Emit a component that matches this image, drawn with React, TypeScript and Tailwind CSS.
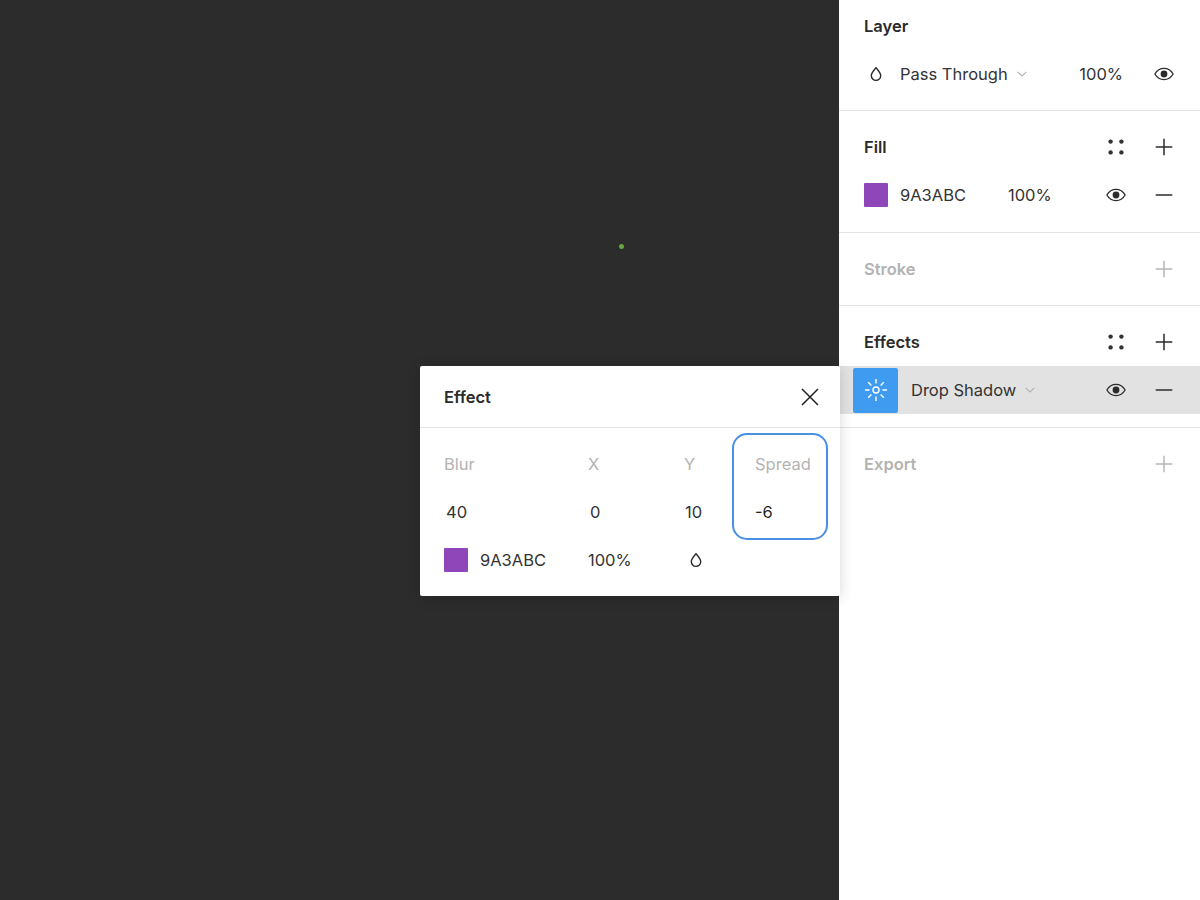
import type { ReactNode } from 'react';

const FONT = 'font-["Inter","Liberation_Sans",sans-serif]';

function Drop({ className = 'text-[#2b2b2b]' }: { className?: string }) {
  return (
    <svg width="14" height="16" viewBox="0 0 14 16" fill="none" className={className}>
      <path
        d="M7 1.6 C8.6 3.9 11.7 6.6 11.7 9.6 C11.7 12.3 9.6 14.4 7 14.4 C4.4 14.4 2.3 12.3 2.3 9.6 C2.3 6.6 5.4 3.9 7 1.6 Z"
        stroke="currentColor"
        strokeWidth="1.4"
        strokeLinejoin="round"
      />
    </svg>
  );
}

function Eye() {
  return (
    <svg width="20" height="14" viewBox="0 0 20 14" fill="none" className="text-[#2b2b2b]">
      <path
        d="M0.9 7 C3 3.4 6.2 1.4 10 1.4 C13.8 1.4 17 3.4 19.1 7 C17 10.6 13.8 12.6 10 12.6 C6.2 12.6 3 10.6 0.9 7 Z"
        stroke="currentColor"
        strokeWidth="1.3"
      />
      <circle cx="10" cy="7" r="3.4" fill="currentColor" />
    </svg>
  );
}

function Dots() {
  return (
    <svg width="16" height="16" viewBox="0 0 16 16" className="text-[#333]">
      <circle cx="2.6" cy="2.6" r="2.2" fill="currentColor" />
      <circle cx="13.4" cy="2.6" r="2.2" fill="currentColor" />
      <circle cx="2.6" cy="13.4" r="2.2" fill="currentColor" />
      <circle cx="13.4" cy="13.4" r="2.2" fill="currentColor" />
    </svg>
  );
}

function Plus({ muted = false }: { muted?: boolean }) {
  return (
    <svg width="18" height="18" viewBox="0 0 18 18" className={muted ? 'text-[#b5b5b5]' : 'text-[#2b2b2b]'}>
      <path d="M9 0.7 V17.3 M0.7 9 H17.3" stroke="currentColor" strokeWidth="1.5" />
    </svg>
  );
}

function Minus() {
  return (
    <svg width="18" height="18" viewBox="0 0 18 18" className="text-[#2b2b2b]">
      <path d="M0.7 9 H17.3" stroke="currentColor" strokeWidth="1.5" />
    </svg>
  );
}

function Chevron() {
  return (
    <svg width="10" height="6" viewBox="0 0 10 6" fill="none" className="text-[#b3b3b3]">
      <path d="M0.6 0.8 L5 5 L9.4 0.8" stroke="currentColor" strokeWidth="1.1" />
    </svg>
  );
}

function Sun() {
  return (
    <svg width="24" height="24" viewBox="0 0 24 24" fill="none" stroke="white" strokeWidth="1.4">
      <circle cx="12" cy="12" r="3" />
      <path d="M12 1V5.5M12 18.5V23M1 12H5.5M18.5 12H23M4.2 4.2L7.4 7.4M16.6 16.6L19.8 19.8M19.8 4.2L16.6 7.4M7.4 16.6L4.2 19.8" />
    </svg>
  );
}

function Swatch() {
  return <div className="w-6 h-6 rounded-[1px] bg-[#8f46b9] shrink-0" />;
}

function IconBox({ children }: { children: ReactNode }) {
  return <div className="w-12 h-12 flex items-center justify-center shrink-0">{children}</div>;
}

function SectionTitle({ title, muted = false, children }: { title: string; muted?: boolean; children?: ReactNode }) {
  return (
    <div className="h-12 flex items-center">
      <span className={`font-semibold ${muted ? 'text-[#b3b3b3]' : 'text-[#2b2b2b]'}`}>{title}</span>
      <div className="ml-auto flex">{children}</div>
    </div>
  );
}

export default function App() {
  return (
    <div className={`relative flex w-[1200px] h-[900px] overflow-hidden bg-white text-[16.5px] leading-6 text-[#333] ${FONT}`}>
      {/* Canvas */}
      <div className="relative w-[839px] bg-[#2c2c2c] shrink-0">
        <div className="absolute left-[619px] top-[244px] w-[5px] h-[5px] rounded-full bg-[#66a63a]" />
      </div>

      {/* Properties panel */}
      <div className="flex-1 flex flex-col">
        <section className="pl-[25px] pr-3 pt-0.5 pb-3 border-b border-[#e5e5e5]">
          <SectionTitle title="Layer" />
          <div className="h-12 flex items-center">
            <div className="w-6 flex justify-center shrink-0"><Drop /></div>
            <span className="ml-3">Pass Through</span>
            <span className="ml-[9px]"><Chevron /></span>
            <span className="ml-auto mr-[17px]">100%</span>
            <IconBox><Eye /></IconBox>
          </div>
        </section>

        <section className="pl-[25px] pr-3 pt-3 pb-[13px] border-b border-[#e5e5e5]">
          <SectionTitle title="Fill">
            <IconBox><Dots /></IconBox>
            <IconBox><Plus /></IconBox>
          </SectionTitle>
          <div className="h-12 flex items-center">
            <Swatch />
            <span className="ml-3 w-[108px]">9A3ABC</span>
            <span>100%</span>
            <div className="ml-auto flex">
              <IconBox><Eye /></IconBox>
              <IconBox><Minus /></IconBox>
            </div>
          </div>
        </section>

        <section className="pl-[25px] pr-3 pt-3 pb-3 border-b border-[#e5e5e5]">
          <SectionTitle title="Stroke" muted>
            <IconBox><Plus muted /></IconBox>
          </SectionTitle>
        </section>

        <section className="pt-3 pb-[13px] border-b border-[#e5e5e5]">
          <div className="pl-[25px] pr-3">
            <SectionTitle title="Effects">
              <IconBox><Dots /></IconBox>
              <IconBox><Plus /></IconBox>
            </SectionTitle>
          </div>
          <div className="h-12 pl-3.5 pr-3 flex items-center bg-[#e2e2e2]">
            <div className="w-[45px] h-[45px] rounded-[2px] bg-[#3f9bf0] flex items-center justify-center shrink-0">
              <Sun />
            </div>
            <span className="ml-[13px]">Drop Shadow</span>
            <span className="ml-[9px]"><Chevron /></span>
            <div className="ml-auto flex">
              <IconBox><Eye /></IconBox>
              <IconBox><Minus /></IconBox>
            </div>
          </div>
        </section>

        <section className="pl-[25px] pr-3 pt-3">
          <SectionTitle title="Export" muted>
            <IconBox><Plus muted /></IconBox>
          </SectionTitle>
        </section>
      </div>

      {/* Effect popover */}
      <div className="absolute left-[420px] top-[366px] w-[420px] h-[230px] bg-white rounded-[2px] shadow-[0_2px_14px_rgba(0,0,0,0.16)]">
        <div className="h-[62px] pl-6 pr-5 flex items-center justify-between border-b border-[#e5e5e5]">
          <span className="font-semibold text-[#2b2b2b]">Effect</span>
          <svg width="20" height="20" viewBox="0 0 20 20" className="text-[#1f1f1f]">
            <path d="M2 2 L18 18 M18 2 L2 18" stroke="currentColor" strokeWidth="1.5" />
          </svg>
        </div>
        <div className="pl-6 pt-3 grid grid-cols-[144px_96px_71px_1fr] auto-rows-[48px] items-center">
          <span className="text-[#b3b3b3]">Blur</span>
          <span className="text-[#b3b3b3]">X</span>
          <span className="text-[#b3b3b3]">Y</span>
          <span className="text-[#b3b3b3]">Spread</span>
          <span className="pl-0.5">40</span>
          <span className="pl-0.5">0</span>
          <span className="pl-px">10</span>
          <span className="text-[#1f1f1f]">-6</span>
          <div className="flex items-center">
            <Swatch />
            <span className="ml-3">9A3ABC</span>
          </div>
          <span>100%</span>
          <div className="pl-[5px]"><Drop /></div>
        </div>
        {/* Hand drawn highlight round the Spread column */}
        <div className="absolute left-[312px] top-[67px] w-[96px] h-[107px] rounded-[15px] border-[2.5px] border-[#4a90e2]" />
      </div>
    </div>
  );
}
